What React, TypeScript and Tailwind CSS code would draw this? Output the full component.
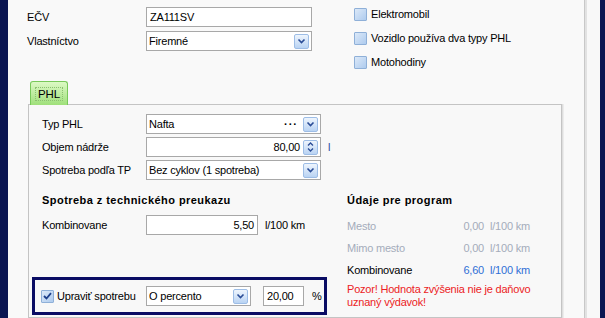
import React from 'react'

const font = "font-['Liberation_Sans','Noto_Sans',sans-serif]"

const DropButton = () => (
  <span className="flex h-[15px] w-[15px] shrink-0 items-center justify-center rounded-[2px] border border-[#9dbde6] bg-gradient-to-b from-[#eef5fd] to-[#b9d3f3]">
    <svg width="9" height="6" viewBox="0 0 9 6">
      <path d="M1.5 1.5 L4.5 4.5 L7.5 1.5" fill="none" stroke="#2a4c96" strokeWidth="1.6" />
    </svg>
  </span>
)

const SpinButton = () => (
  <span className="flex h-[15px] w-[15px] shrink-0 flex-col items-center justify-center gap-[2px] rounded-[2px] border border-[#9dbde6] bg-gradient-to-b from-[#eef5fd] to-[#b9d3f3]">
    <svg width="7" height="4" viewBox="0 0 7 4">
      <path d="M1 3.5 L3.5 1 L6 3.5" fill="none" stroke="#2a4c96" strokeWidth="1.3" />
    </svg>
    <svg width="7" height="4" viewBox="0 0 7 4">
      <path d="M1 0.5 L3.5 3 L6 0.5" fill="none" stroke="#2a4c96" strokeWidth="1.3" />
    </svg>
  </span>
)

const Select = ({ value, width, dots }: { value: string; width: string; dots?: boolean }) => (
  <div className={`flex h-[20px] ${width} items-center border border-[#a8a8a8] bg-white pl-[2px] pr-[2px]`}>
    <span className="flex-1 truncate">{value}</span>
    {dots && <span className="mr-[5px] text-[11px] font-bold tracking-[1px]">···</span>}
    <DropButton />
  </div>
)

const TextBox = ({ value, width, right }: { value: string; width: string; right?: boolean }) => (
  <div className={`flex h-[20px] ${width} items-center border border-[#a8a8a8] bg-white px-[3px] ${right ? 'justify-end' : ''}`}>
    {value}
  </div>
)

const Check = ({ checked }: { checked?: boolean }) => (
  <span className="flex h-[13px] w-[13px] shrink-0 items-center justify-center rounded-[1px] border border-[#8fb0d8] bg-gradient-to-br from-[#dce9f8] to-[#aecbee]">
    {checked && (
      <svg width="9" height="8" viewBox="0 0 9 8">
        <path d="M1 4 L3.5 6.5 L8 1.2" fill="none" stroke="#1d3f8a" strokeWidth="1.8" />
      </svg>
    )}
  </span>
)

const Row = ({ label, children }: { label: string; children: React.ReactNode }) => (
  <div className="flex h-[20px] items-center">
    <span className="w-[104px] shrink-0">{label}</span>
    {children}
  </div>
)

const Stat = ({ label, value, active }: { label: string; value: string; active?: boolean }) => (
  <div className={`flex h-[22px] items-center ${active ? 'text-black' : 'text-[#a4acbb]'}`}>
    <span className="w-[90px]">{label}</span>
    <span className={`w-[47px] text-right ${active ? 'text-[#2f6fd6]' : ''}`}>{value}</span>
    <span className={`ml-[6px] ${active ? 'text-[#2f6fd6]' : ''}`}>l/100 km</span>
  </div>
)

export default function App() {
  return (
    <div className={`flex h-[318px] w-[605px] overflow-hidden bg-[#f9f9f9] text-[11px] leading-[13px] tracking-[-0.2px] text-black ${font}`}>
      <div className="w-[8px] shrink-0 bg-[#0b1652]" />

      <div className="flex w-[576px] shrink-0 flex-col">
        <div className="flex h-[81px] shrink-0 pl-[19px] pt-[7px]">
          <div className="flex flex-col gap-[4px]">
            <div className="flex h-[20px] items-center">
              <span className="w-[119px]">EČV</span>
              <TextBox value="ZA111SV" width="w-[166px]" />
            </div>
            <div className="flex h-[20px] items-center">
              <span className="w-[119px]">Vlastníctvo</span>
              <Select value="Firemné" width="w-[166px]" />
            </div>
          </div>
          <div className="ml-[42px] flex flex-col pt-[1px]">
            <label className="flex h-[24px] items-start gap-[4px]"><Check />Elektromobil</label>
            <label className="flex h-[24px] items-start gap-[4px]"><Check />Vozidlo používa dva typy PHL</label>
            <label className="flex h-[24px] items-start gap-[4px]"><Check />Motohodiny</label>
          </div>
        </div>

        <div className="ml-[20px] mr-[22px] flex flex-1 flex-col">
          <div className="relative z-10 -mb-px ml-[2px] flex h-[24px] w-[38px] items-center justify-center rounded-t-[3px] border border-b-0 border-[#78c95a] bg-gradient-to-b from-[#dcf9c4] to-[#9fe07a]">
            <span className="border border-dotted border-[#8bbf70] px-[2px] text-[11.5px] leading-[12px]">PHL</span>
          </div>
          <div className="flex-1 border border-[#c4c4c4] bg-[#f8f8f8] pl-[13px] pt-[9px] shadow-[1px_0_0_#dedede,2px_0_0_#ececec]">
            <div className="flex flex-col gap-[3px]">
              <Row label="Typ PHL"><Select value="Nafta" width="w-[175px]" dots /></Row>
              <Row label="Objem nádrže">
                <div className="flex h-[20px] w-[175px] items-center border border-[#a8a8a8] bg-white pl-[3px] pr-[2px]">
                  <span className="mr-[3px] flex-1 text-right">80,00</span>
                  <SpinButton />
                </div>
                <span className="ml-[7px] text-[#2f4fa0]">l</span>
              </Row>
              <Row label="Spotreba podľa TP"><Select value="Bez cyklov (1 spotreba)" width="w-[175px]" /></Row>
            </div>

            <div className="mt-[14px] flex">
              <div className="flex w-[305px] flex-col">
                <div className="h-[13px] font-bold tracking-[0.45px]">Spotreba z technického preukazu</div>
                <div className="mt-[8px]">
                  <Row label="Kombinovane">
                    <TextBox value="5,50" width="w-[112px]" right />
                    <span className="ml-[7px]">l/100 km</span>
                  </Row>
                </div>
                <div className="-ml-[10px] mt-[42px] flex h-[38px] w-[295px] items-center border-[3px] border-[#0a0c64] pl-[6px]">
                  <label className="flex w-[105px] items-center gap-[3px]"><Check checked />Upraviť spotrebu</label>
                  <Select value="O percento" width="w-[105px]" />
                  <TextBox value="20,00" width="w-[41px] ml-[12px]" />
                  <span className="ml-[8px]">%</span>
                </div>
              </div>

              <div className="flex flex-col">
                <div className="h-[13px] font-bold tracking-[0.45px]">Údaje pre program</div>
                <div className="mt-[8px] flex flex-col">
                  <Stat label="Mesto" value="0,00" />
                  <Stat label="Mimo mesto" value="0,00" />
                  <Stat label="Kombinovane" value="6,60" active />
                </div>
                <div className="mt-[2px] w-[200px] text-[#ec1c24]">Pozor! Hodnota zvýšenia nie je daňovo uznaný výdavok!</div>
              </div>
            </div>
          </div>
        </div>
      </div>

      <div className="w-[3px] shrink-0 border-l border-[#c8c8c8] bg-[#e2e2e2]" />
      <div className="w-[13px] shrink-0 bg-[#f8f8f8]" />
      <div className="w-[5px] shrink-0 bg-[#0b1652]" />
    </div>
  )
}
